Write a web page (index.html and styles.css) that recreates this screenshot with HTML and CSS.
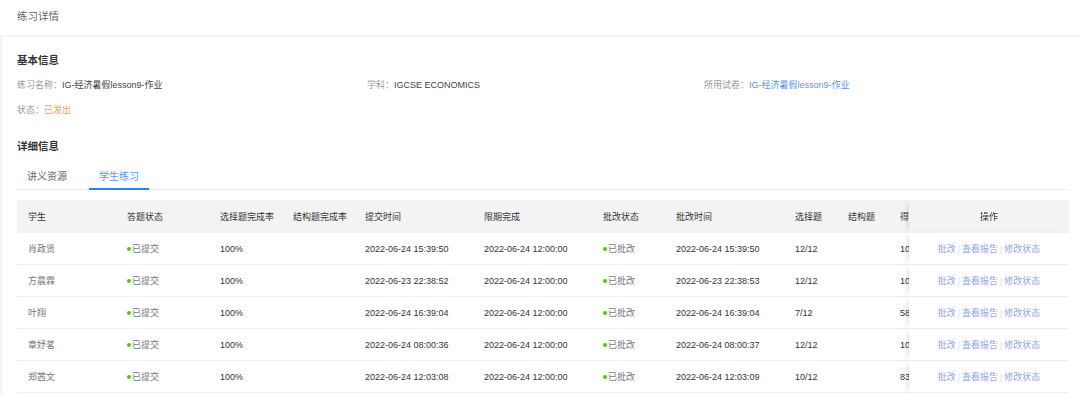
FILE: index.html
```html
<!DOCTYPE html>
<html lang="zh-CN">
<head>
<meta charset="UTF-8" />
<title>练习详情</title>
<link rel="stylesheet" href="styles.css">
</head>
<body>

<div class="page-head">练习详情</div>

<div class="card">
  <div class="section-title">基本信息</div>
  <div class="info-row">
    <div><span class="label">练习名称：</span><span class="value">IG-经济暑假lesson9-作业</span></div>
    <div><span class="label">学科：</span><span class="value">IGCSE ECONOMICS</span></div>
    <div><span class="label">所用试卷：</span><span class="value link">IG-经济暑假lesson9-作业</span></div>
  </div>
  <div class="info-row status-row">
    <div><span class="label">状态：</span><span class="value orange">已发出</span></div>
  </div>

  <div class="section-title detail-title">详细信息</div>
  <div class="tabs">
    <div class="tab">讲义资源</div>
    <div class="tab active">学生练习</div>
  </div>

  <div class="table-wrap">
    <table class="grid">
      <colgroup>
        <col style="width:99px"><col style="width:93px"><col style="width:73px"><col style="width:72px">
        <col style="width:119px"><col style="width:119px"><col style="width:73px"><col style="width:119px">
        <col style="width:53px"><col style="width:52px"><col style="width:80px"><col style="width:63px">
        <col style="width:160px">
      </colgroup>
      <thead>
        <tr>
          <th>学生</th><th>答题状态</th><th>选择题完成率</th><th>结构题完成率</th>
          <th>提交时间</th><th>限期完成</th><th>批改状态</th><th>批改时间</th>
          <th>选择题</th><th>结构题</th><th>得分</th><th></th>
          <th class="fixed center">操作</th>
        </tr>
      </thead>
      <tbody>
        <tr>
          <td class="name">肖政贤</td><td class="state"><i class="dot"></i>已提交</td><td>100%</td><td></td>
          <td>2022-06-24 15:39:50</td><td>2022-06-24 12:00:00</td><td class="state"><i class="dot"></i>已批改</td><td>2022-06-24 15:39:50</td>
          <td>12/12</td><td></td><td class="score">100</td><td></td>
          <td class="fixed center"><a>批改</a><span class="sep">|</span><a>查看报告</a><span class="sep">|</span><a>修改状态</a></td>
        </tr>
        <tr>
          <td class="name">方晨霖</td><td class="state"><i class="dot"></i>已提交</td><td>100%</td><td></td>
          <td>2022-06-23 22:38:52</td><td>2022-06-24 12:00:00</td><td class="state"><i class="dot"></i>已批改</td><td>2022-06-23 22:38:53</td>
          <td>12/12</td><td></td><td class="score">100</td><td></td>
          <td class="fixed center"><a>批改</a><span class="sep">|</span><a>查看报告</a><span class="sep">|</span><a>修改状态</a></td>
        </tr>
        <tr>
          <td class="name">叶翔</td><td class="state"><i class="dot"></i>已提交</td><td>100%</td><td></td>
          <td>2022-06-24 16:39:04</td><td>2022-06-24 12:00:00</td><td class="state"><i class="dot"></i>已批改</td><td>2022-06-24 16:39:04</td>
          <td>7/12</td><td></td><td class="score">58.33</td><td></td>
          <td class="fixed center"><a>批改</a><span class="sep">|</span><a>查看报告</a><span class="sep">|</span><a>修改状态</a></td>
        </tr>
        <tr>
          <td class="name">章妤茗</td><td class="state"><i class="dot"></i>已提交</td><td>100%</td><td></td>
          <td>2022-06-24 08:00:36</td><td>2022-06-24 12:00:00</td><td class="state"><i class="dot"></i>已批改</td><td>2022-06-24 08:00:37</td>
          <td>12/12</td><td></td><td class="score">100</td><td></td>
          <td class="fixed center"><a>批改</a><span class="sep">|</span><a>查看报告</a><span class="sep">|</span><a>修改状态</a></td>
        </tr>
        <tr>
          <td class="name">郑茜文</td><td class="state"><i class="dot"></i>已提交</td><td>100%</td><td></td>
          <td>2022-06-24 12:03:08</td><td>2022-06-24 12:00:00</td><td class="state"><i class="dot"></i>已批改</td><td>2022-06-24 12:03:09</td>
          <td>10/12</td><td></td><td class="score">83.33</td><td></td>
          <td class="fixed center"><a>批改</a><span class="sep">|</span><a>查看报告</a><span class="sep">|</span><a>修改状态</a></td>
        </tr>
      </tbody>
    </table>
  </div>
</div>

</body>
</html>
```

FILE: styles.css
```css
body {
  margin: 0;
  background: #f4f4f4;
  font-family: "Liberation Sans", "Noto Sans CJK SC", sans-serif;
  color: #333;
  overflow: hidden;
}
.page-head {
  background: #fff;
  height: 35px;
  line-height: 33px;
  padding-left: 17px;
  font-size: 10.5px;
  color: #666;
  margin-bottom: 2px;
}
.card {
  background: #fff;
  margin-left: 2px;
  padding: 15px 11px 0 15px;
  min-height: 400px;
}
.section-title {
  font-size: 10.5px;
  font-weight: bold;
  line-height: 16px;
  color: #333;
}
.info-row {
  display: grid;
  grid-template-columns: 350px 337px 1fr;
  font-size: 9px;
  line-height: 14px;
  margin-top: 10px;
}
.status-row {
  margin-top: 11px;
}
.label {
  color: #999;
}
.value {
  color: #444;
}
.value.link {
  color: #5a95f5;
}
.value.orange {
  color: #f7a54a;
}
.detail-title {
  margin-top: 21px;
}
.tabs {
  display: flex;
  gap: 12px;
  margin-top: 16px;
  border-bottom: 1px solid #eee;
}
.tab {
  font-size: 10px;
  line-height: 14px;
  padding: 0 10px 4px;
  border-bottom: 2px solid transparent;
  color: #666;
  margin-bottom: -1px;
}
.tab.active {
  color: #5a95f5;
  border-bottom-color: #1e88f0;
}
.table-wrap {
  margin-top: 10px;
  overflow-x: auto;
  overflow-y: hidden;
}
.table-wrap::-webkit-scrollbar {
  height: 3px;
}
.table-wrap::-webkit-scrollbar-track {
  background: transparent;
  margin: 0 10px;
}
.table-wrap::-webkit-scrollbar-thumb {
  background: #c8c8c8;
  border-radius: 2px;
}
.grid {
  table-layout: fixed;
  border-collapse: separate;
  border-spacing: 0;
  width: 1175px;
  font-size: 9px;
}
.grid th,
.grid td {
  text-align: left;
  padding: 0 0 0 11px;
  white-space: nowrap;
  overflow: hidden;
}
.grid th {
  height: 33px;
  background: #f3f3f3;
  color: #333;
  font-weight: normal;
}
.grid td {
  height: 31px;
  border-bottom: 1px solid #efefef;
  background: #fff;
  color: #333;
}
.grid td.name,
.grid td.state {
  color: #777;
}
.dot {
  display: inline-block;
  width: 4px;
  height: 4px;
  border-radius: 50%;
  background: #52c41a;
  vertical-align: middle;
  margin: -2px 1px 0 0;
}
.grid .fixed {
  position: sticky;
  right: 0;
  box-shadow: -4px 0 6px -3px rgba(0, 0, 0, 0.14);
  padding: 0;
}
.grid .center {
  text-align: center;
}
.grid th.fixed {
  background: #f3f3f3;
}
.grid td.fixed a {
  color: #8aa2f3;
}
.sep {
  color: #ddd;
  margin: 0 2px;
}
```
